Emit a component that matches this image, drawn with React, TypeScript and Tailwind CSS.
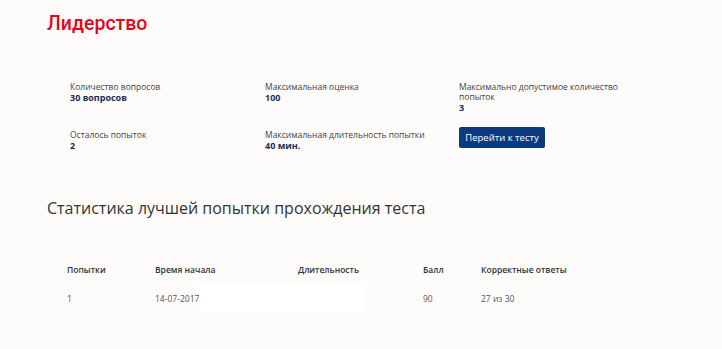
export default function App() {
  const font = { fontFamily: '"Open Sans", "Noto Sans", sans-serif' };
  const label = "text-[8.5px] leading-[10px] text-[#444]";
  const value = "text-[9px] leading-[11px] font-bold text-[#1b2d58]";
  const cols = "grid grid-cols-[88px_143px_125px_58px_120px] h-[14px] leading-[14px]";
  return (
    <div className="w-[722px] h-[349px] bg-[#fdfcfb] text-[#333]" style={font}>
      <div className="pl-[47px] pt-[11px]">
        <h1 className="text-[19.5px] leading-[26px] font-medium text-[#e2071b]" style={{ fontFamily: 'Roboto, "Open Sans", sans-serif' }}>Лидерство</h1>
      </div>
      <div className="grid grid-cols-[195px_194px_200px] pl-[70px] pt-[45px] gap-y-[17px]">
        <div>
          <div className={label}>Количество вопросов</div>
          <div className={value}>30 вопросов</div>
        </div>
        <div>
          <div className={label}>Максимальная оценка</div>
          <div className={value}>100</div>
        </div>
        <div>
          <div className={`${label} w-[175px]`}>Максимально допустимое количество попыток</div>
          <div className={value}>3</div>
        </div>
        <div>
          <div className={label}>Осталось попыток</div>
          <div className={value}>2</div>
        </div>
        <div>
          <div className={label}>Максимальная длительность попытки</div>
          <div className={value}>40 мин.</div>
        </div>
        <div>
          <button className="block -mt-[3px] w-[86px] h-[21px] rounded-[2px] bg-[#0b3a7e] text-white text-[9.5px] leading-[21px] text-center">Перейти к тесту</button>
        </div>
      </div>
      <h2 className="pl-[47px] pt-[46px] text-[16px] leading-[22px] text-[#333]">Статистика лучшей попытки прохождения теста</h2>
      <div className="pl-[67px] pt-[44px] text-[8.5px] text-[#333]">
        <div className={`${cols} font-semibold`}>
          <div>Попытки</div>
          <div>Время начала</div>
          <div>Длительность</div>
          <div>Балл</div>
          <div>Корректные ответы</div>
        </div>
        <div className={`${cols} relative mt-[15px] text-[#555]`}>
          <div>1</div>
          <div>14-07-2017</div>
          <div></div>
          <div>90</div>
          <div>27 из 30</div>
          <div className="absolute left-[132px] top-[-8px] w-[165px] h-[29px] bg-white" />
        </div>
      </div>
    </div>
  );
}
